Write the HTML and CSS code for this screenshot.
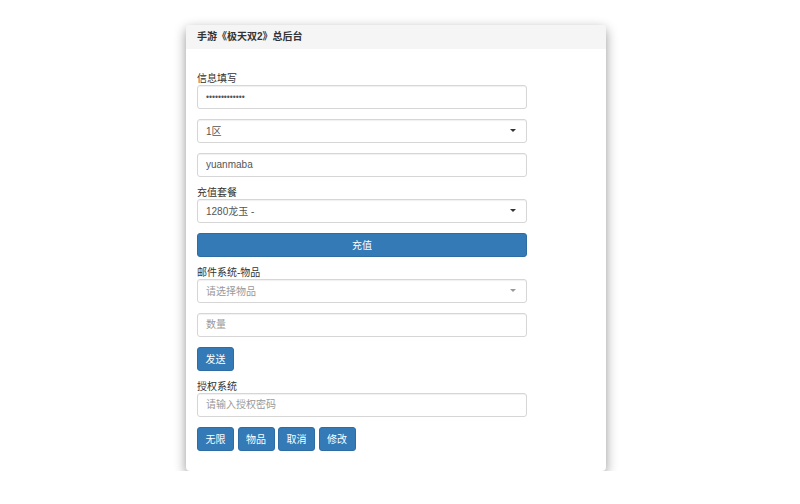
FILE: index.html
```html
<!DOCTYPE html>
<html lang="zh-CN">
<head>
    <meta charset="UTF-8">
    <meta name="viewport" content="width=device-width, initial-scale=1.0">
    <title>手游《极天双2》总后台</title>
    <link rel="stylesheet" href="styles.css">
</head>
<body>

    <div class="panel">
        <div class="panel-heading">手游《极天双2》总后台</div>
        <div class="panel-body">

            <!-- 信息填写 -->
            <label class="lbl">信息填写</label>
            <input class="field" type="password" value="1234567890123">
            <div class="field select">
                <span>1区</span><i class="caret"></i>
            </div>
            <input class="field" type="text" value="yuanmaba">

            <!-- 充值 -->
            <label class="lbl">充值套餐</label>
            <div class="field select">
                <span>1280龙玉 -</span><i class="caret"></i>
            </div>
            <button class="btn btn-block">充值</button>

            <!-- 邮件 -->
            <label class="lbl">邮件系统-物品</label>
            <div class="field select placeholder">
                <span>请选择物品</span><i class="caret light"></i>
            </div>
            <input class="field" type="text" placeholder="数量">
            <div class="btn-row">
                <button class="btn">发送</button>
            </div>

            <!-- 授权 -->
            <label class="lbl">授权系统</label>
            <input class="field" type="text" placeholder="请输入授权密码">
            <div class="btn-row last">
                <button class="btn">无限</button>
                <button class="btn">物品</button>
                <button class="btn">取消</button>
                <button class="btn">修改</button>
            </div>

        </div>
    </div>

</body>
</html>
```

FILE: styles.css
```css
* {
    margin: 0;
    padding: 0;
    box-sizing: border-box;
    font-family: "Liberation Sans", Arial, "Noto Sans CJK SC", sans-serif;
}
body {
    background: #fff;
    color: #333;
    font-size: 10px;
}
.panel {
    width: 420px;
    margin: 25px 0 0 186px;
    background: #fff;
    border-radius: 4px;
    box-shadow: 0 4px 12px rgba(0, 0, 0, 0.42);
    overflow: hidden;
}
.panel-heading {
    height: 24px;
    line-height: 24px;
    padding-left: 11px;
    background: #f5f5f5;
    font-size: 10px;
    font-weight: bold;
    color: #333;
}
.panel-body {
    width: 341px;
    padding: 24px 0 20px 11px;
}
.lbl {
    display: block;
    height: 12px;
    line-height: 12px;
    color: #333;
}
.field {
    display: flex;
    align-items: center;
    width: 100%;
    height: 23.5px;
    margin-bottom: 10.5px;
    padding: 0 8px;
    border: 1px solid #d6d6d6;
    border-radius: 3px;
    box-shadow: inset 0 1px 1px rgba(0, 0, 0, 0.06);
    background: #fff;
    font-size: 10px;
    color: #555;
    outline: none;
}
input.field::placeholder { color: #999; }
input[type=password].field {
    font-size: 8.5px;
    color: #555;
}
.select span { flex: 1; }
.placeholder { color: #999; }
.caret {
    width: 0;
    height: 0;
    margin-right: 2px;
    border-left: 3px solid transparent;
    border-right: 3px solid transparent;
    border-top: 3px solid #333;
}
.caret.light { border-top-color: #999; }
.btn {
    display: block;
    width: 37px;
    height: 23.5px;
    background: #337ab7;
    border: 1px solid #2e6da4;
    border-radius: 3px;
    color: #fff;
    font-size: 10px;
    cursor: pointer;
}
.btn-block {
    width: 100%;
    margin-bottom: 10.5px;
}
.btn-row {
    display: flex;
    gap: 3.5px;
    margin-bottom: 10.5px;
}
.btn-row.last { margin-bottom: 0; }
```
